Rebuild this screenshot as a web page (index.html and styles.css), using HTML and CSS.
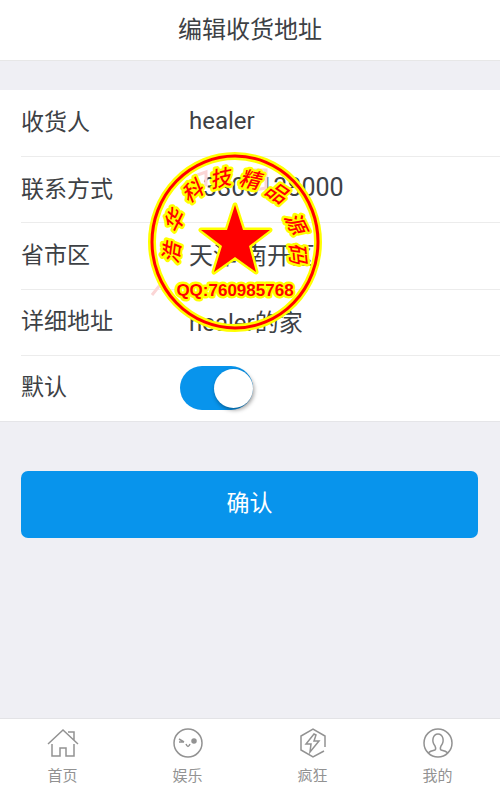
FILE: index.html
```html
<!DOCTYPE html>
<html lang="zh-CN">
<head>
  <meta charset="UTF-8">
  <meta name="viewport" content="width=device-width, initial-scale=1.0">
  <title>编辑收货地址</title>
  <link rel="stylesheet" href="styles.css">
</head>
<body>

<header class="top-bar">
  <h1>编辑收货地址</h1>
</header>

<main>
  <form class="address-form">
    <div class="fields">
      <div class="field">
        <label for="name">收货人</label>
        <input type="text" id="name" value="healer">
      </div>
      <div class="field">
        <label for="phone">联系方式</label>
        <input type="tel" id="phone" value="13800138000">
      </div>
      <div class="field">
        <label for="region">省市区</label>
        <input type="text" id="region" value="天津 南开区">
      </div>
      <div class="field">
        <label for="detail">详细地址</label>
        <input type="text" id="detail" value="healer的家">
      </div>
      <div class="field">
        <label for="default">默认</label>
        <input type="checkbox" class="switch" id="default" checked>
      </div>

      <svg class="seal" viewBox="0 0 176 180">
        <path class="smudge" d="M5 143l8-10M45 25l14-5v13l-10 2M106 18h13v18l-11 2"/>
        <ellipse class="ring-glow" cx="88" cy="90" rx="83" ry="86"/>
        <ellipse class="ring" cx="88" cy="90" rx="83" ry="86"/>
        <g class="seal-name">
          <text transform="translate(24 101) rotate(-82)" y="8">浩</text>
          <text transform="translate(27 69) rotate(-64)" y="8">华</text>
          <text transform="translate(45 39) rotate(-36)" y="8">科</text>
          <text transform="translate(73 26) rotate(-12)" y="8">技</text>
          <text transform="translate(103 27) rotate(12)" y="8">精</text>
          <text transform="translate(130 40) rotate(34)" y="8">品</text>
          <text transform="translate(149 71) rotate(64)" y="8">源</text>
          <text transform="translate(151 101) rotate(84)" y="8">码</text>
        </g>
        <path class="star" d="M88 53l8 25h27l-21 16 7 26-21-15-21 15 8-26-21-16h26z"/>
        <text class="seal-qq" x="88" y="144">QQ:760985768</text>
      </svg>
    </div>

    <button type="submit" class="confirm">确认</button>
  </form>
</main>

<nav class="tab-bar">
  <a href="#">
    <svg viewBox="0 0 32 32">
      <path d="M1 17L16 3l15 14M21 5h6v8M5 17v12h8v-8h6v8h8V17"/>
    </svg>
    首页
  </a>
  <a href="#">
    <svg viewBox="0 0 32 32">
      <circle cx="16" cy="16" r="14"/>
      <path d="M7 12l5 3M7 15h5M14 17q2 5 4 0"/>
      <circle class="dot" cx="22" cy="14" r="2"/>
    </svg>
    娱乐
  </a>
  <a href="#">
    <svg viewBox="0 0 32 32">
      <path d="M28 20V9L16 2 4 9v14l12 7 11-6"/>
      <path d="M17 7L9 17h5l-1 8 9-11h-5l2-6z"/>
    </svg>
    疯狂
  </a>
  <a href="#">
    <svg viewBox="0 0 32 32">
      <circle cx="16" cy="16" r="14"/>
      <path d="M6 26q2-2 7-3c1-1 1-2 0-4-4-5-2-12 3-12s7 7 3 12c-1 2-1 3 0 4q5 1 7 3"/>
    </svg>
    我的
  </a>
</nav>

</body>
</html>
```
FILE: styles.css
```css
* {
  box-sizing: border-box;
}

body {
  display: flex;
  flex-direction: column;
  min-height: 100vh;
  margin: 0;
  background: #efeff4;
  color: #3d4145;
  font-family: Roboto, "Noto Sans CJK SC", sans-serif;
}

.top-bar {
  padding: 12px;
  background: #fff;
  border-bottom: 1px solid #e7e7e7;
  text-align: center;
}

.top-bar h1 {
  margin: 0;
  font-size: 24px;
  font-weight: 400;
  line-height: 36px;
}

main {
  flex: 1;
}

.fields {
  position: relative;
  display: grid;
  grid-auto-rows: 1fr;
  min-height: 332px;
  margin-top: 29px;
  padding-left: 21px;
  background: #fff;
  border-bottom: 1px solid #e5e5e8;
}

.field {
  display: flex;
  align-items: center;
  font-size: 24px;
}

.field + .field {
  border-top: 1px solid #ececec;
}

.field label {
  width: 159px;
  padding-bottom: 6px;
  font-size: 23px;
}

.field input[type="text"],
.field input[type="tel"] {
  flex: 1;
  min-width: 0;
  padding: 0 9px 4px;
  border: none;
  outline: none;
  background: none;
  color: inherit;
  font: inherit;
}

.field input[type="tel"] {
  font-size: 25px;
}

.switch {
  appearance: none;
  width: 73px;
  height: 44px;
  margin: 0;
  padding: 3px 0;
  border-radius: 22px;
  background: #0894ec;
  cursor: pointer;
}

.switch::before {
  content: "";
  display: block;
  width: 39px;
  height: 39px;
  border-radius: 50%;
  background: #fff;
  box-shadow: 1px 2px 4px rgba(0, 0, 0, 0.4);
}

.switch:checked::before {
  margin-left: auto;
}

.confirm {
  display: block;
  width: calc(100% - 43px);
  margin: 49px 22px 49px 21px;
  padding: 15px 0 16px;
  border: none;
  border-radius: 7px;
  background: #0894ec;
  color: #fff;
  font: inherit;
  font-size: 23px;
  line-height: 36px;
  cursor: pointer;
}

/* company seal over the form */
.seal {
  position: absolute;
  left: 147px;
  top: 62px;
  width: 176px;
  height: 180px;
  overflow: visible;
  pointer-events: none;
}

.smudge {
  fill: none;
  stroke: #fbd5d5;
  stroke-width: 3;
}

.ring-glow,
.ring {
  fill: none;
  stroke: #ff0;
  stroke-width: 8;
}

.ring {
  stroke: #f00;
  stroke-width: 3;
}

.star,
.seal text {
  fill: #f00;
  stroke: #ff0;
  stroke-width: 5;
  stroke-linejoin: round;
  paint-order: stroke;
}

.seal text {
  text-anchor: middle;
}

.seal-name {
  font-family: "Noto Sans CJK SC", sans-serif;
  font-size: 21px;
  font-style: italic;
  font-weight: 500;
}

.seal-qq {
  font-family: "Liberation Sans Narrow", "Liberation Sans", sans-serif;
  font-size: 17px;
  font-weight: 700;
}

.tab-bar {
  display: grid;
  grid-template-columns: repeat(4, 1fr);
  height: 70px;
  padding-top: 8px;
  background: #fff;
  border-top: 1px solid #e3e3e6;
}

.tab-bar a {
  display: flex;
  flex-direction: column;
  align-items: center;
  color: #929292;
  font-size: 15px;
  line-height: 22px;
  text-decoration: none;
  gap: 6px;
}

.tab-bar svg {
  width: 32px;
  height: 32px;
  fill: none;
  stroke: #929292;
  stroke-width: 1.5;
}

.tab-bar .dot {
  fill: #929292;
}
```
